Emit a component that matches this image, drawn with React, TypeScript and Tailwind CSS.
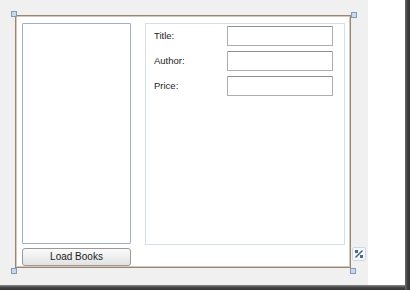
import React from "react";

const fieldLabels = ["Title:", "Author:", "Price:"];

function Handle({ className }: { className: string }) {
  return (
    <div
      className={`absolute w-[6px] h-[6px] border border-[#7f9bbd] bg-[#c9d8ea] ${className}`}
    />
  );
}

function ResizeGlyph() {
  return (
    <div className="absolute left-[336px] top-[231px] w-[14px] h-[14px] rounded-[2px] border border-[#cdd8e4] bg-[#f5f8fb] flex items-center justify-center">
      <svg width="10" height="10" viewBox="0 0 10 10">
        <rect x="1" y="1" width="3" height="3" fill="#4d6a8c" />
        <rect x="6" y="6" width="3" height="3" fill="#4d6a8c" />
        <path d="M1.5 8.5 L8.5 1.5" stroke="#4d6a8c" strokeWidth="1.6" />
      </svg>
    </div>
  );
}

export default function App() {
  return (
    <div
      className="flex w-[410px] h-[290px] text-[9.5px] text-[#1e1e1e]"
      style={{ fontFamily: '"Liberation Sans", Arial, sans-serif' }}
    >
      <div className="flex flex-col w-[405px]">
        <div className="flex h-[285px]">
          {/* Designer surface */}
          <div className="w-[368px] h-full bg-[#f0f0f0] pl-[15px] pt-[15px]">
            <div className="relative w-[336px] h-[253px] border border-[#9a8670] shadow-[inset_0_0_0_1px_#d3c8bb] bg-white flex pl-[6px] pt-[7px]">
              {/* Left column: list + button */}
              <div className="flex flex-col w-[109px]">
                <div className="h-[221px] border border-[#9fb1c6] rounded-[1px] bg-white" />
                <button className="mt-[4px] h-[18px] rounded-[3px] border border-[#9a9a9a] bg-gradient-to-b from-[#fbfbfb] to-[#e2e2e2] text-[10px] text-[#1c1c1c] leading-none">
                  Load Books
                </button>
              </div>

              {/* Right panel: book fields */}
              <div className="ml-[14px] w-[200px] h-[222px] border border-[#d5dfe9] pt-[2px] pl-[8px] flex flex-col gap-[5px]">
                {fieldLabels.map((label) => (
                  <div key={label} className="flex items-center h-[20px]">
                    <span className="w-[73px]">{label}</span>
                    <div className="w-[106px] h-[20px] rounded-[1px] border border-[#abadb3] border-t-[#8d9199] bg-white" />
                  </div>
                ))}
              </div>

              <Handle className="left-[-5px] top-[-5px]" />
              <Handle className="left-[335px] top-[-4px]" />
              <Handle className="left-[-5px] top-[252px]" />
              <Handle className="left-[334px] top-[252px]" />
              <ResizeGlyph />
            </div>
          </div>
          <div className="w-[37px] h-full bg-white" />
        </div>
        <div className="h-[5px] bg-gradient-to-b from-[#8a8a8a] via-[#454545] to-[#333]" />
      </div>
      <div className="w-[5px] h-full bg-gradient-to-r from-[#6a6a6a] via-[#404040] to-[#333]" />
    </div>
  );
}
